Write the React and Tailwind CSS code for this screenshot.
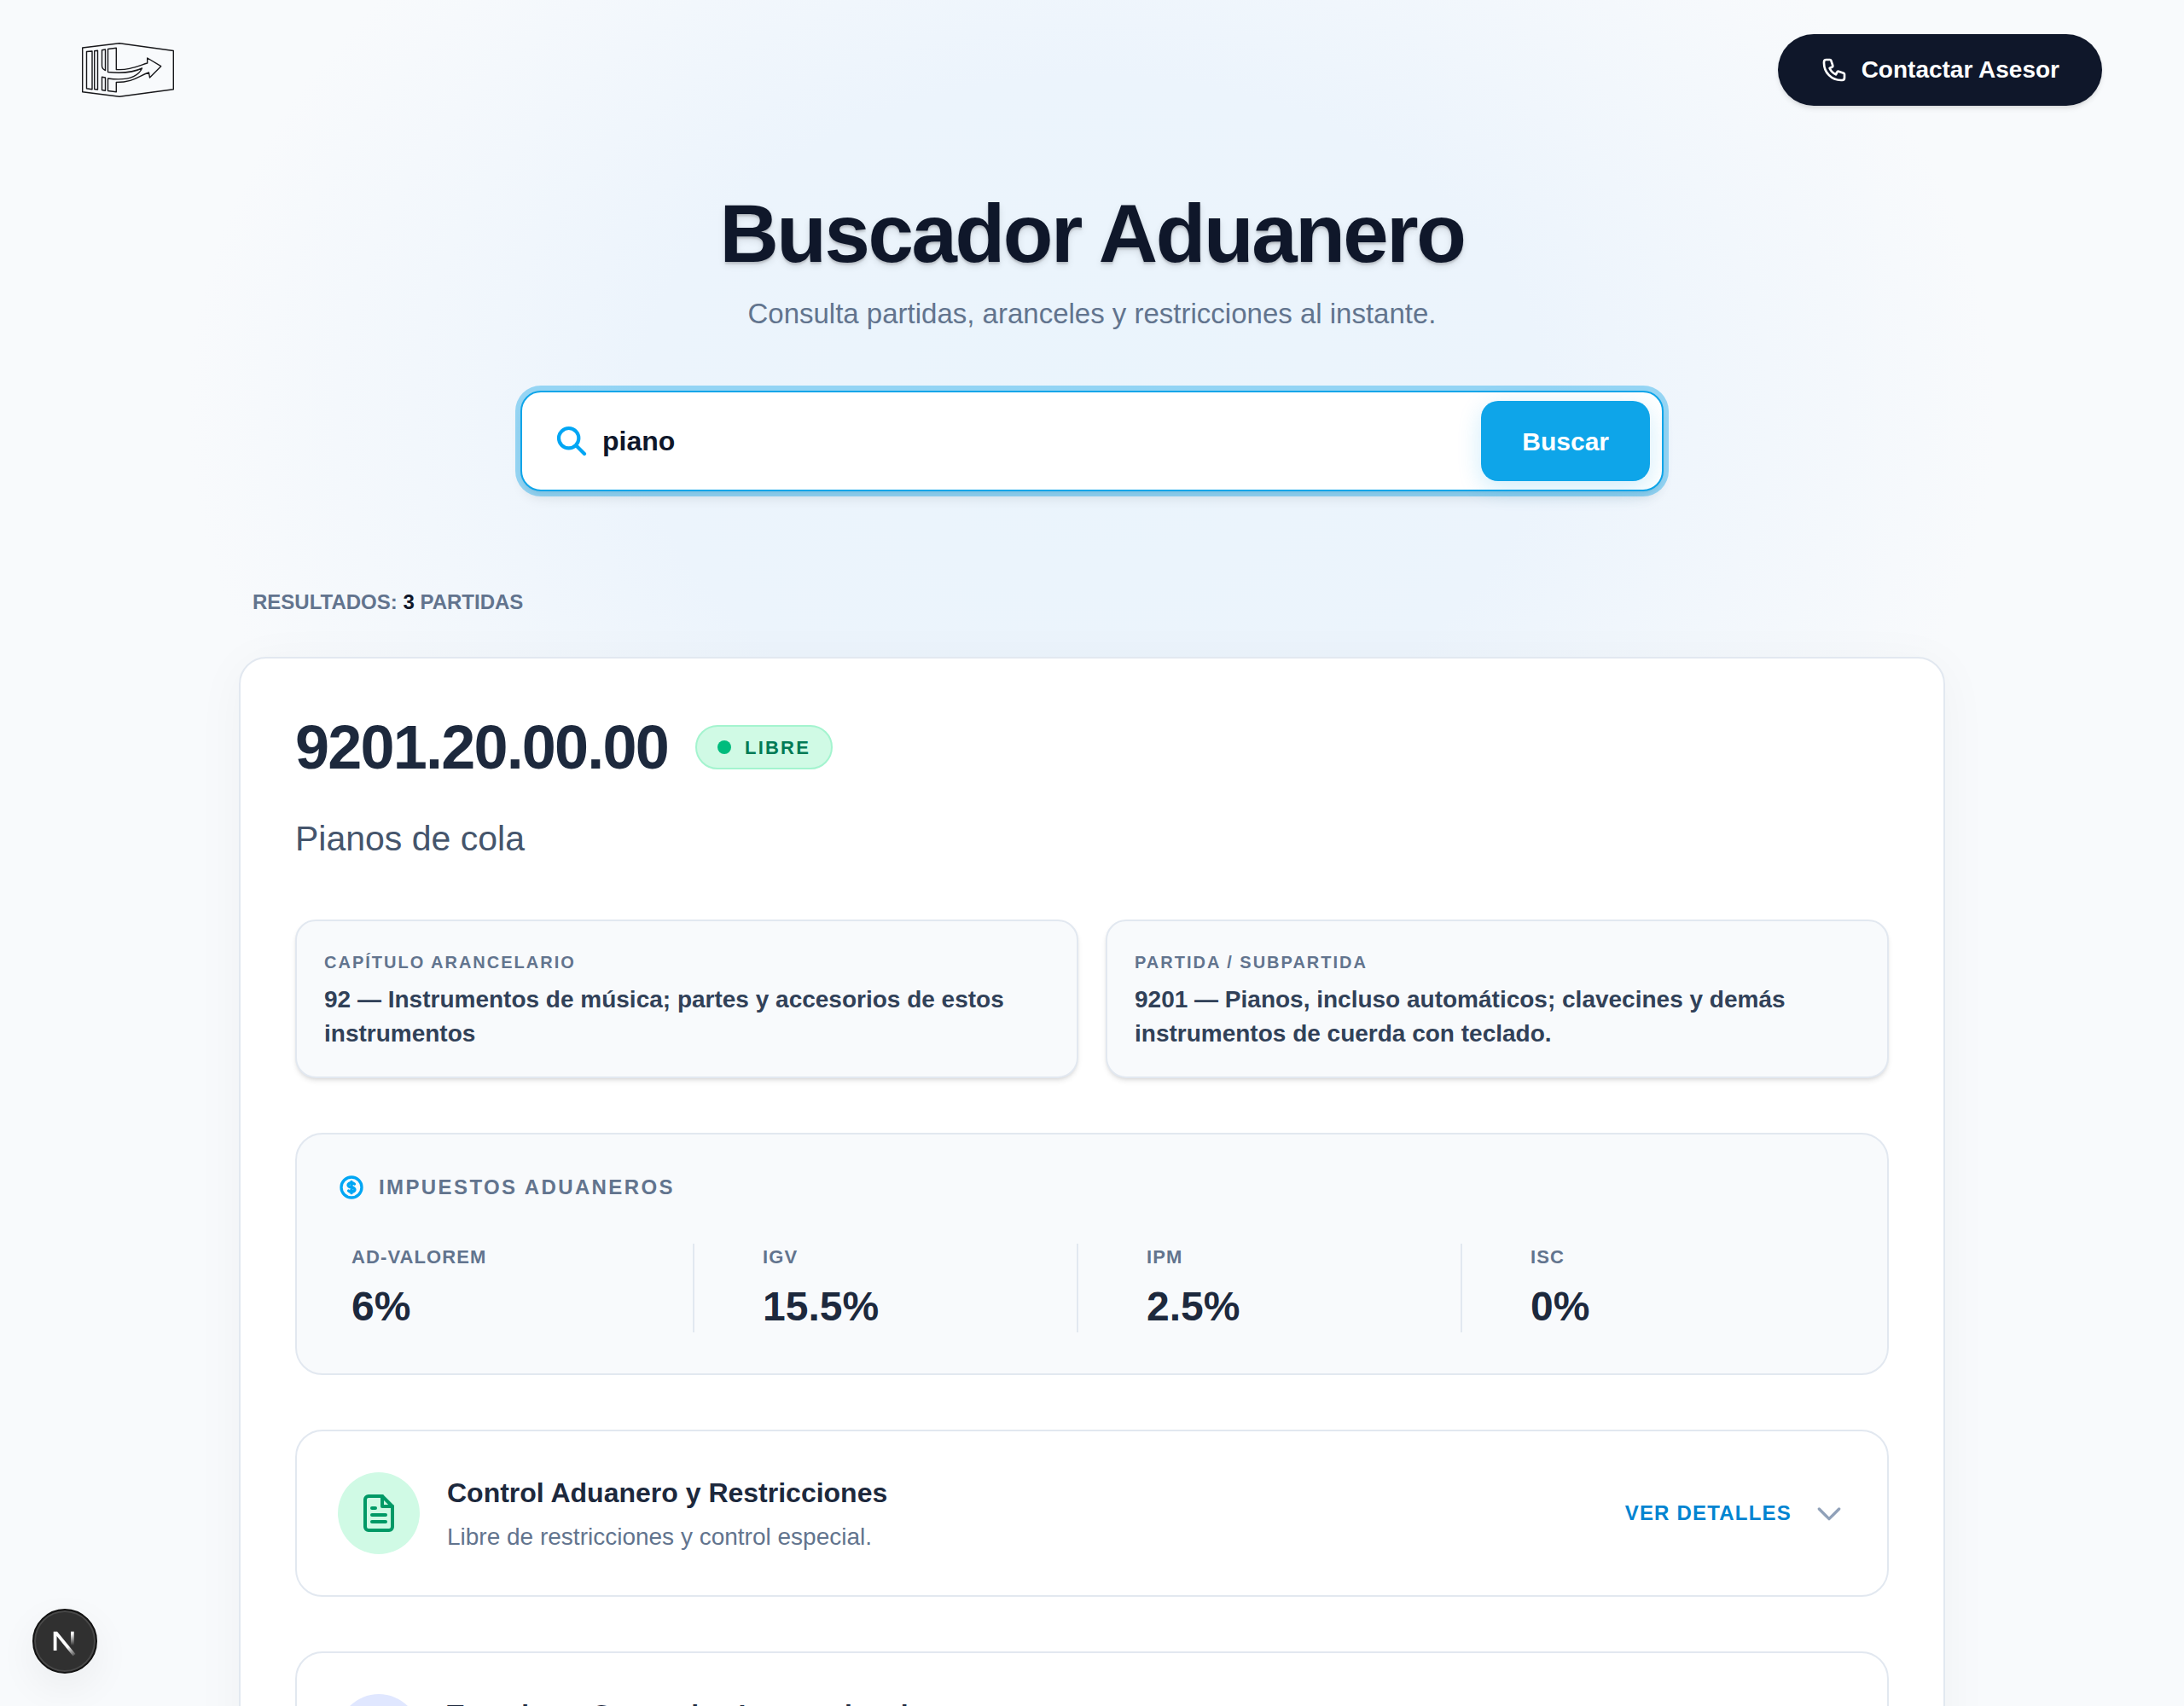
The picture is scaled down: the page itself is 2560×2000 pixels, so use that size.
import { HiOutlineCurrencyDollar, HiOutlinePhone, HiOutlineSearch } from "react-icons/hi";
import { FiFileText, FiGlobe } from "react-icons/fi";

const headings = [
  {
    title: "CAPÍTULO ARANCELARIO",
    text: "92 — Instrumentos de música; partes y accesorios de estos instrumentos",
  },
  {
    title: "PARTIDA / SUBPARTIDA",
    text: "9201 — Pianos, incluso automáticos; clavecines y demás instrumentos de cuerda con teclado.",
  },
];

const taxes = [
  { name: "AD-VALOREM", value: "6%" },
  { name: "IGV", value: "15.5%" },
  { name: "IPM", value: "2.5%" },
  { name: "ISC", value: "0%" },
];

function Logo() {
  return (
    <svg
      className="w-[108px] h-16"
      viewBox="0 0 108 64"
      fill="none"
      stroke="#18181b"
      strokeWidth="1.4"
      strokeLinejoin="round"
    >
      <path d="M.7 6 44 .7 107.300 9.500V54.700L44 63.300.7 57.700Z" />
      <path d="M5.500 10.500 12 10V54.700L5.500 53.700Z" />
      <path d="M14.700 9.700 18.500 9.300V55L14.700 54.500Z" />
      <path d="M23.500 8.700 27.500 8V32.500C25 31.500 23.500 29.500 23.500 27Z" />
      <path d="M30.500 7.500 40.300 6.300V31.500C54 32.500 64 28 76.700 24V18L92.700 27.700 79.500 41 78.500 35C66 39 61 46.500 40.300 46.500V57.700L30.500 56.500V42C46 44 64 44 70.500 30C58 36 45 36 30.500 34.500Z" />
      <path d="M23.500 40.300 27.500 41V56.300L23.500 55.500Z" />
    </svg>
  );
}

function Header() {
  return (
    <header className="flex items-center justify-between px-24 py-10">
      <a href="#" aria-label="Inicio">
        <Logo />
      </a>
      <button className="flex items-center gap-4 h-[84px] px-[50px] rounded-full bg-[#0f172a] text-white text-[28px] font-bold shadow-md">
        <HiOutlinePhone className="size-8" />
        Contactar Asesor
      </button>
    </header>
  );
}

function SearchBox() {
  return (
    <form className="mt-17 mx-auto flex items-center w-full max-w-[1340px] h-[118px] pl-[38px] pr-3.5 rounded-3xl bg-white border-2 border-[#0ea5e9] ring-6 ring-[#0ea5e9]/40 shadow-lg">
      <HiOutlineSearch className="size-10 shrink-0 text-[#00a6f4] [&_path]:stroke-[2.5]" />
      <input
        type="text"
        aria-label="Buscar partida"
        defaultValue="piano"
        className="grow min-w-0 h-full px-4 text-[32px] font-bold text-[#0f172a] outline-none"
      />
      <button
        type="button"
        className="h-[94px] px-12 rounded-[20px] bg-[#0ea5e9] text-white text-[30px] font-bold shadow-[0_8px_28px_rgba(14,165,233,0.2)]"
      >
        Buscar
      </button>
    </form>
  );
}

function Taxes() {
  return (
    <section className="mt-16 h-[284px] px-12 py-12 rounded-[32px] bg-[#f8fafc] border-2 border-[#e2e8f0]">
      <h3 className="flex items-center gap-4 h-7 text-2xl font-bold tracking-widest text-[#62748e]">
        <HiOutlineCurrencyDollar className="size-8 text-[#00a6f4] [&_path]:stroke-[2.5]" />
        IMPUESTOS ADUANEROS
      </h3>
      <dl className="mt-13 grid grid-cols-4 gap-8">
        {taxes.map((tax) => (
          <div
            key={tax.name}
            className="h-[104px] pl-12 first:pl-4 border-r-2 border-[#e2e8f0] last:border-r-0"
          >
            <dt className="text-[22px] leading-8 font-bold tracking-wider text-[#62748e]">
              {tax.name}
            </dt>
            <dd className="mt-2.5 text-5xl leading-[64px] font-bold text-[#1d293d]">
              {tax.value}
            </dd>
          </div>
        ))}
      </dl>
    </section>
  );
}

function DetailRow({ icon, iconClass, title, text }) {
  return (
    <section className="mt-16 flex items-center h-[196px] px-12 rounded-[32px] bg-white border-2 border-[#e2e8f0]">
      <div className={`flex items-center justify-center size-24 rounded-full ${iconClass}`}>
        {icon}
      </div>
      <div className="ml-8 grow">
        <h3 className="text-[32px] leading-[48px] font-bold text-[#1d293d]">{title}</h3>
        <p className="mt-2 text-[28px] leading-10 text-[#62748e]">{text}</p>
      </div>
      <button className="flex items-center gap-6 text-2xl font-bold tracking-wider text-[#0084d1]">
        VER DETALLES
        <svg
          className="size-10 text-[#90a1b9]"
          viewBox="0 0 24 24"
          fill="none"
          stroke="currentColor"
          strokeWidth="2"
          strokeLinecap="round"
          strokeLinejoin="round"
        >
          <path d="M19 9l-7 7-7-7" />
        </svg>
      </button>
    </section>
  );
}

function ResultCard() {
  return (
    <article className="mt-12 px-16 pt-16 pb-16 rounded-[32px] bg-white border-2 border-[#e2e8f0] shadow-[0_8px_60px_rgba(15,23,42,0.04)]">
      <div className="flex items-center gap-8">
        <h2 className="text-[72px] leading-20 font-bold tracking-tight text-[#1d293d]">
          9201.20.00.00
        </h2>
        <span className="flex items-center gap-4 h-[52px] px-6 rounded-full bg-[#d0fae5] border-2 border-[#a4f4cf] text-[22px] font-bold tracking-widest text-[#007a55]">
          <span className="size-4 rounded-full bg-[#00bc7d]" />
          LIBRE
        </span>
      </div>
      <p className="mt-9 text-[41px] leading-[62px] text-[#45556c]">Pianos de cola</p>

      <div className="mt-16 grid grid-cols-2 gap-8">
        {headings.map((item) => (
          <div
            key={item.title}
            className="h-[186px] px-8 pt-8 rounded-3xl bg-[#f8fafc] border-2 border-[#e2e8f0] shadow-md"
          >
            <p className="text-xl leading-8 font-bold tracking-widest text-[#62748e]">
              {item.title}
            </p>
            <p className="mt-2 text-[28px] leading-10 font-bold text-[#314158]">{item.text}</p>
          </div>
        ))}
      </div>

      <Taxes />
      <DetailRow
        icon={<FiFileText className="size-12 text-[#009966]" />}
        iconClass="bg-[#d0fae5]"
        title="Control Aduanero y Restricciones"
        text="Libre de restricciones y control especial."
      />
      <DetailRow
        icon={<FiGlobe className="size-12 text-[#4f39f6]" />}
        iconClass="bg-[#e0e7ff]"
        title="Tratados y Convenios Internacionales"
        text="Acuerdos comerciales vigentes."
      />
    </article>
  );
}

function DevBadge() {
  return (
    <button
      aria-label="Next.js"
      className="fixed left-[38px] bottom-[38px] flex items-center justify-center size-[76px] rounded-full bg-[#303030] border-2 border-[#121212] shadow-[inset_0_0_0_2px_#484848,0_16px_48px_rgba(0,0,0,0.06)]"
    >
      <svg className="w-8 h-9" viewBox="0 0 32 36" fill="none">
        <defs>
          <linearGradient id="diag" x1="19" y1="25" x2="28" y2="37" gradientUnits="userSpaceOnUse">
            <stop stopColor="#fff" />
            <stop offset="1" stopColor="#fff" stopOpacity="0" />
          </linearGradient>
          <linearGradient id="stem" x1="25" y1="9" x2="25" y2="23" gradientUnits="userSpaceOnUse">
            <stop stopColor="#fff" />
            <stop offset="1" stopColor="#fff" stopOpacity="0" />
          </linearGradient>
        </defs>
        <path d="M2.700 6.700H7L28.500 33 25.500 35.500 6.500 12V29H2.700Z" fill="url(#diag)" />
        <path d="M23 6.700H26.700V23H23Z" fill="url(#stem)" />
      </svg>
    </button>
  );
}

function App() {
  return (
    <div className="min-h-screen bg-[#f8fafc] bg-[radial-gradient(1060px_780px_at_50%_480px,#eaf4fc_0%,#ecf4fc_50%,#f8fafc_100%)] bg-no-repeat font-['Liberation_Sans',Arial,sans-serif]">
      <Header />
      <main className="max-w-[2000px] mx-auto pb-16">
        <div className="pt-[62px] text-center">
          <h1 className="text-8xl font-bold tracking-tight text-[#0f172a] text-shadow-lg">
            Buscador Aduanero
          </h1>
          <p className="mt-6 text-[33px] leading-11 text-[#62748e]">
            Consulta partidas, aranceles y restricciones al instante.
          </p>
        </div>
        <SearchBox />
        <p className="mt-[114px] px-4 text-2xl leading-8 font-bold text-[#62748e]">
          RESULTADOS: <span className="text-[#0f172a]">3</span> PARTIDAS
        </p>
        <ResultCard />
      </main>
      <DevBadge />
    </div>
  );
}

export default App;
